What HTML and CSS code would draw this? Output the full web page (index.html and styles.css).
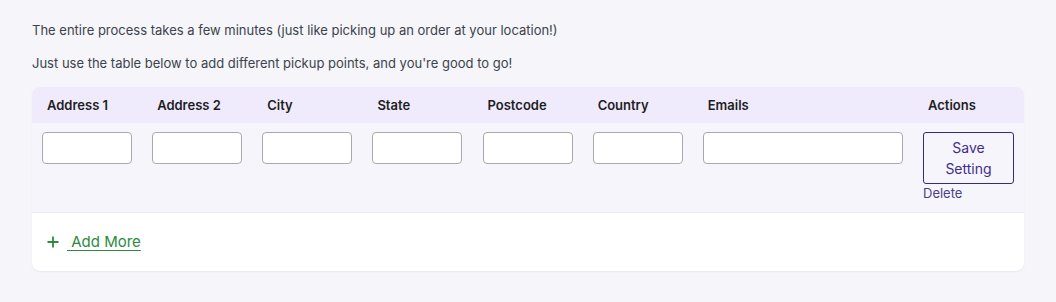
FILE: index.html
```html
<!DOCTYPE html>
<html>
<head>
<meta charset="utf-8">
<link rel="stylesheet" href="styles.css">
</head>
<body>
<div class="page">
  <p class="intro">The entire process takes a few minutes (just like picking up an order at your location!)</p>
  <p class="intro">Just use the table below to add different pickup points, and you're good to go!</p>
  <div class="card">
    <div class="row head">
      <div class="th">Address 1</div>
      <div class="th">Address 2</div>
      <div class="th">City</div>
      <div class="th">State</div>
      <div class="th">Postcode</div>
      <div class="th">Country</div>
      <div class="th">Emails</div>
      <div class="th">Actions</div>
    </div>
    <div class="row body">
      <div class="td"><input class="field" type="text"></div>
      <div class="td"><input class="field" type="text"></div>
      <div class="td"><input class="field" type="text"></div>
      <div class="td"><input class="field" type="text"></div>
      <div class="td"><input class="field" type="text"></div>
      <div class="td"><input class="field" type="text"></div>
      <div class="td"><input class="field wide" type="text"></div>
      <div class="td actions">
        <button class="save">Save<br>Setting</button>
        <a class="delete" href="#">Delete</a>
      </div>
    </div>
    <div class="foot">
      <span class="plus">
        <svg width="12" height="12" viewBox="0 0 12 12"><path d="M6 0.5v11M0.5 6h11" stroke="#2a8c3c" stroke-width="1.8" fill="none"/></svg>
      </span>
      <a class="add" href="#">&nbsp;Add More</a>
    </div>
  </div>
</div>
</body>
</html>
```
FILE: styles.css
```css
html, body {
  margin: 0;
  background: #f5f5fa;
}
body {
  font-family: Inter, "Noto Sans", sans-serif;
  color: #3c434a;
  width: 1056px;
  height: 302px;
  overflow: hidden;
}
.page {
  padding: 20px 32px 0;
}
.intro {
  margin: 0 0 13px;
  font-size: 13px;
  line-height: 20px;
}
.intro + .intro {
  margin-bottom: 14px;
}
.card {
  background: #fff;
  border-radius: 8px;
  box-shadow: 0 1px 2px rgba(0,0,0,0.06);
  overflow: hidden;
}
.row {
  display: grid;
  grid-template-columns: repeat(6, 1fr) 2fr 111px;
}
.head {
  background: #efebfd;
  height: 36px;
  align-items: center;
}
.th {
  padding-left: 15px;
  font-size: 13px;
  font-weight: 600;
  color: #1e1e1e;
}
.body {
  background: #f6f5fb;
  border-bottom: 1px solid #ebebf0;
  height: 90px;
  box-sizing: border-box;
}
.td {
  padding: 9px 10px 0;
}
.field {
  display: block;
  box-sizing: border-box;
  width: 90px;
  height: 32px;
  border: 1px solid #a7aaad;
  border-radius: 4px;
  background: #fff;
  margin: 0;
}
.field.wide {
  width: 200px;
}
.actions {
  display: flex;
  flex-direction: column;
  align-items: flex-start;
}
.save {
  box-sizing: border-box;
  width: 91px;
  height: 52px;
  border: 1px solid #3b2585;
  border-radius: 3px;
  background: transparent;
  color: #3f2d8c;
  font-family: Inter, "Noto Sans", sans-serif;
  font-size: 14px;
  line-height: 21px;
  padding: 0;
  margin: 0;
}
.delete {
  margin-top: 0;
  font-size: 13px;
  line-height: 18px;
  color: #4b3f88;
  text-decoration: none;
}
.foot {
  height: 58px;
  display: flex;
  align-items: center;
  padding-left: 15px;
}
.plus {
  display: flex;
  width: 12px;
  height: 12px;
  margin-right: 8px;
}
.add {
  font-size: 15px;
  color: #2a8c3c;
  text-decoration: underline;
  text-underline-offset: 3px;
  line-height: 20px;
}
```
